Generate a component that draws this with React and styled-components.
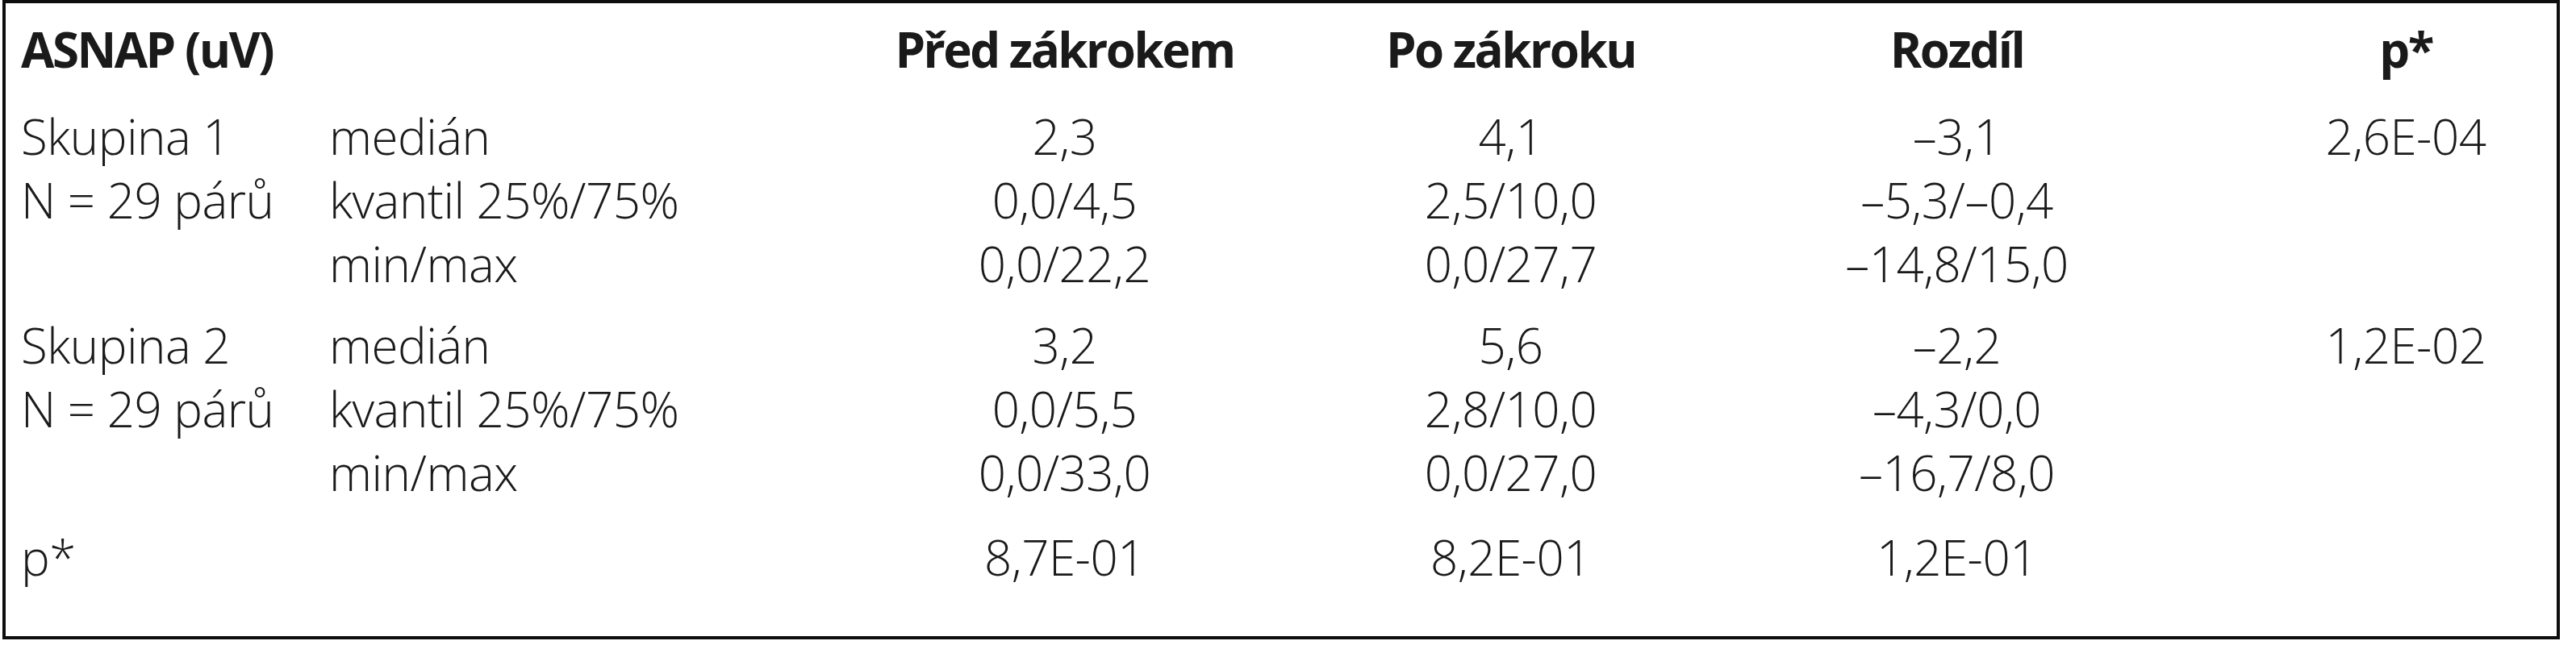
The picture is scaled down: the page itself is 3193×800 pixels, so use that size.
import React from "react";
import styled, { createGlobalStyle } from "styled-components";

const GlobalStyle = createGlobalStyle`
  html, body {
    margin: 0;
    padding: 0;
    background: #ffffff;
  }
  body {
    font-family: "Open Sans", "Noto Sans", "DejaVu Sans", sans-serif;
    color: #1a1a1a;
  }
`;

const Frame = styled.div`
  box-sizing: border-box;
  width: 3170px;
  height: 793px;
  margin-left: 3px;
  border: 4px solid #0d0d0d;
  padding: 18px 0 0 19px;
  background: #ffffff;
`;

const Row = styled.div`
  display: grid;
  grid-template-columns: 382px 635px 553px 553px 553px 1fr;
  height: 79px;
  line-height: 79px;
  font-size: 60px;
  font-weight: ${({ $bold }) => ($bold ? 700 : 300)};
  font-stretch: 90%;
  letter-spacing: ${({ $bold }) => ($bold ? "-2.5px" : "-0.5px")};
  white-space: nowrap;
`;

const Group = styled.div`
  margin-top: ${({ $gap }) => $gap}px;
`;

const Label = styled.div`
  text-align: left;
`;

const Value = styled.div`
  text-align: center;
  padding-left: ${({ $shift }) => ($shift ? "93px" : "0")};
`;

const HeaderTitle = styled.div`
  grid-column: 1 / span 2;
  text-align: left;
`;

const columns = ["Před zákrokem", "Po zákroku", "Rozdíl", "p*"];

const groups = [
  {
    name: "Skupina 1",
    size: "N = 29 párů",
    rows: [
      ["medián", "2,3", "4,1", "–3,1", "2,6E-04"],
      ["kvantil 25%/75%", "0,0/4,5", "2,5/10,0", "–5,3/–0,4", ""],
      ["min/max", "0,0/22,2", "0,0/27,7", "–14,8/15,0", ""],
    ],
  },
  {
    name: "Skupina 2",
    size: "N = 29 párů",
    rows: [
      ["medián", "3,2", "5,6", "–2,2", "1,2E-02"],
      ["kvantil 25%/75%", "0,0/5,5", "2,8/10,0", "–4,3/0,0", ""],
      ["min/max", "0,0/33,0", "0,0/27,0", "–16,7/8,0", ""],
    ],
  },
];

const pRow = ["8,7E-01", "8,2E-01", "1,2E-01", ""];

const ValueCells = ({ values }) =>
  values.map((v, i) => (
    <Value key={i} $shift={i === values.length - 1}>
      {v}
    </Value>
  ));

export default function App() {
  return (
    <>
      <GlobalStyle />
      <Frame>
        <Row $bold>
          <HeaderTitle>ASNAP (uV)</HeaderTitle>
          <ValueCells values={columns} />
        </Row>

        {groups.map((g, gi) => (
          <Group key={g.name} $gap={gi === 0 ? 29 : 22}>
            {g.rows.map(([stat, ...vals], ri) => (
              <Row key={stat}>
                <Label>{ri === 0 ? g.name : ri === 1 ? g.size : ""}</Label>
                <Label>{stat}</Label>
                <ValueCells values={vals} />
              </Row>
            ))}
          </Group>
        ))}

        <Group $gap={26}>
          <Row>
            <Label>p*</Label>
            <Label />
            <ValueCells values={pRow} />
          </Row>
        </Group>
      </Frame>
    </>
  );
}
